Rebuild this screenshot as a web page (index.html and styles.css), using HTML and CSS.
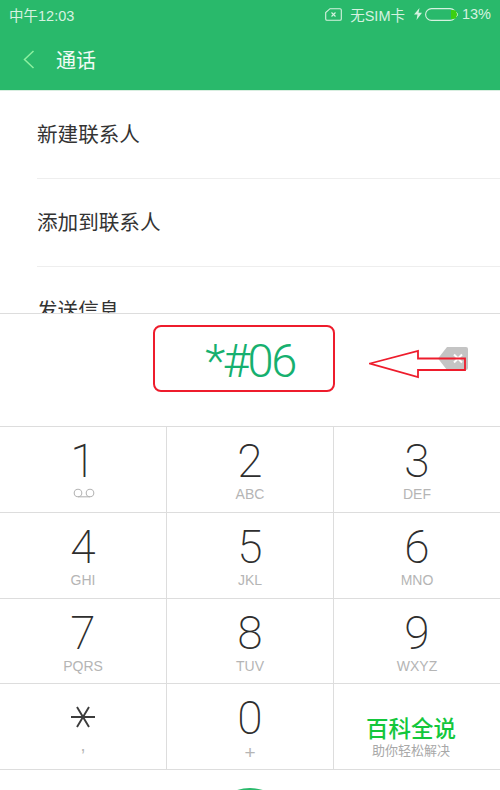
FILE: index.html
```html
<!DOCTYPE HTML>
<html>

<head>
	<meta charset="utf-8">
	<title>通话</title>
	<link rel="stylesheet" href="styles.css">
</head>
<body>
	<div class="phone">
		<div class="top">
			<div class="status">
				<span class="clock">中午12:03</span>
				<span class="status-right">
					<svg class="sim-icon" width="17" height="13" viewBox="0 0 17 13"><path d="M5 .7H15a1.300 1.300 0 0 1 1.300 1.300V11a1.300 1.300 0 0 1-1.300 1.300H2a1.300 1.300 0 0 1-1.300-1.300V4.500Z" fill="none" stroke="#d6f2e0" stroke-width="1.100"/><path d="M6.500 4.500 10.500 8.500M10.500 4.500 6.500 8.500" stroke="#d6f2e0" stroke-width="1.100"/></svg>
					<span class="sim-text">无SIM卡</span>
					<svg class="bolt" width="8" height="12" viewBox="0 0 8 12"><path d="M5.500 0 0 6.500H3.500L2.500 12 8 4.800H4.500Z" fill="#d6f2e0"/></svg>
					<svg class="battery" width="33" height="13" viewBox="0 0 33 13"><rect x=".6" y=".6" width="30.400" height="11.800" rx="5.900" fill="none" stroke="#d6f2e0" stroke-width="1.100"/><path d="M26 2h2a4.500 4.500 0 0 1 0 9h-2Z" fill="#3ccf12"/><path d="M31.500 4.500a2.500 2.500 0 0 1 0 4" fill="none" stroke="#d6f2e0"/></svg>
					<span class="percent">13%</span>
				</span>
			</div>
			<div class="title-bar">
				<svg class="back" width="12" height="19" viewBox="0 0 12 19"><path d="M10.500 1 1.500 9.500 10.500 18" fill="none" stroke="#8df0a0" stroke-width="1.500"/></svg>
				<span class="title">通话</span>
			</div>
		</div>

		<ul class="menu">
			<li>新建联系人</li>
			<li>添加到联系人</li>
			<li>发送信息</li>
		</ul>

		<div class="dialer">
			<div class="number-box">*#06</div>
			<svg class="backspace" width="30" height="23" viewBox="0 0 30 23"><path d="M9 0H28a2 2 0 0 1 2 2V21a2 2 0 0 1-2 2H9L0 11.500Z" fill="#c4c4c4"/><path d="M16 7.500 24 15.500M24 7.500 16 15.500" stroke="#fff" stroke-width="2"/></svg>
			<svg class="arrow" width="102" height="30" viewBox="0 0 102 30"><path d="M1 14.500 49 2V9.500H96V21H49V28Z" fill="none" stroke="#ee1c2c" stroke-width="1.800"/></svg>
		</div>

		<div class="keypad">
			<div class="key"><span class="digit">1</span><svg class="voicemail" width="22" height="10" viewBox="0 0 22 10"><circle cx="5" cy="5" r="3.800" fill="none" stroke="#b5b5b5" stroke-width="1.100"/><circle cx="17" cy="5" r="3.800" fill="none" stroke="#b5b5b5" stroke-width="1.100"/><path d="M5 8.800H17" stroke="#b5b5b5" stroke-width="1.100"/></svg></div>
			<div class="key"><span class="digit">2</span><span class="letters">ABC</span></div>
			<div class="key"><span class="digit">3</span><span class="letters">DEF</span></div>
			<div class="key"><span class="digit">4</span><span class="letters">GHI</span></div>
			<div class="key"><span class="digit">5</span><span class="letters">JKL</span></div>
			<div class="key"><span class="digit">6</span><span class="letters">MNO</span></div>
			<div class="key"><span class="digit">7</span><span class="letters">PQRS</span></div>
			<div class="key"><span class="digit">8</span><span class="letters">TUV</span></div>
			<div class="key"><span class="digit">9</span><span class="letters">WXYZ</span></div>
			<div class="key"><svg class="star" width="26" height="24" viewBox="0 0 26 24"><path d="M1 12H25M7 2 19 22M19 2 7 22" stroke="#3c3c3c" stroke-width="1.900" fill="none"/></svg><span class="letters comma">,</span></div>
			<div class="key"><span class="digit">0</span><span class="letters plus">+</span></div>
			<div class="key key-mark">
				<span class="mark-big">百科全说</span>
				<span class="mark-small">助你轻松解决</span>
			</div>
		</div>

		<div class="call-bar"><div class="call-btn"></div></div>
	</div>
</body>

</html>
```

FILE: styles.css
```css
html, body {
  margin: 0;
  padding: 0;
}

body {
  background: #fff;
  font-family: "Liberation Sans", "Noto Sans CJK SC", sans-serif;
}

.phone {
  position: relative;
  display: flex;
  flex-direction: column;
  width: 500px;
  height: 790px;
  overflow: hidden;
}

.top {
  flex: none;
  height: 90px;
  background: #29b96b;
  border-bottom: 1px solid #d8eee0;
}

.status {
  display: flex;
  justify-content: space-between;
  align-items: center;
  height: 28px;
  padding: 0 9px;
  color: #d6f2e0;
  font-size: 14.500px;
}

.status-right {
  display: flex;
  align-items: center;
}

.sim-icon {
  margin-right: 8px;
}

.sim-text {
  margin-right: 9px;
}

.bolt {
  margin-right: 3px;
}

.percent {
  margin-left: 4px;
}

.title-bar {
  display: flex;
  align-items: center;
  height: 62px;
  padding-left: 23px;
}

.title {
  margin-left: 21px;
  color: #f2fbf5;
  font-size: 20px;
}

.menu {
  flex: none;
  height: 222px;
  margin: 0;
  padding: 0 0 0 37px;
  overflow: hidden;
  list-style: none;
  color: #333;
  font-size: 20.600px;
}

.menu li {
  height: 87px;
  line-height: 87px;
  border-bottom: 1px solid #eee;
}

.dialer {
  flex: none;
  position: relative;
  display: flex;
  align-items: flex-start;
  height: 114px;
  padding: 11px 0 0 153px;
  box-sizing: border-box;
  border-top: 1px solid #ddd;
  border-bottom: 1px solid #ddd;
}

.number-box {
  box-sizing: border-box;
  width: 182px;
  height: 67px;
  padding-left: 12px;
  border: 2px solid #ee1c2c;
  border-radius: 8px;
  color: #16b06f;
  font-family: Roboto, sans-serif;
  font-size: 47px;
  font-weight: 300;
  letter-spacing: -2.500px;
  line-height: 67px;
  text-align: center;
}

.backspace {
  position: absolute;
  left: 438px;
  top: 33px;
}

.arrow {
  position: absolute;
  left: 369px;
  top: 35px;
}

.keypad {
  flex: none;
  display: grid;
  grid-template-columns: 167px 167px 166px;
  grid-auto-rows: 85.750px;
}

.key {
  display: flex;
  flex-direction: column;
  align-items: center;
  box-sizing: border-box;
  padding-top: 9px;
  border-bottom: 1px solid #ddd;
  border-right: 1px solid #ddd;
  color: #2e2e2e;
}

.key:nth-child(3n) {
  border-right: 0;
}

.digit {
  height: 50px;
  font-family: Roboto, sans-serif;
  font-size: 46px;
  font-weight: 200;
  line-height: 50px;
}

.letters {
  color: #b5b5b5;
  font-size: 14px;
  line-height: 16px;
}

.voicemail {
  margin: 2px 0 0 2px;
}

.star {
  margin: 12px 0 8px;
}

.comma {
  font-size: 18px;
}

.plus {
  font-size: 19px;
  line-height: 19px;
}

.key-mark {
  padding: 33px 12px 0 0;
}

.mark-big {
  color: #14c73c;
  font-size: 22.500px;
  font-weight: 500;
  line-height: 25px;
}

.mark-small {
  color: #a8a8a8;
  font-size: 13px;
  line-height: 17px;
}

.call-bar {
  flex: 1;
  display: flex;
  justify-content: center;
}

.call-btn {
  flex: none;
  width: 84px;
  height: 84px;
  margin-top: 18px;
  border-radius: 50%;
  background: #29b96b;
}
```
